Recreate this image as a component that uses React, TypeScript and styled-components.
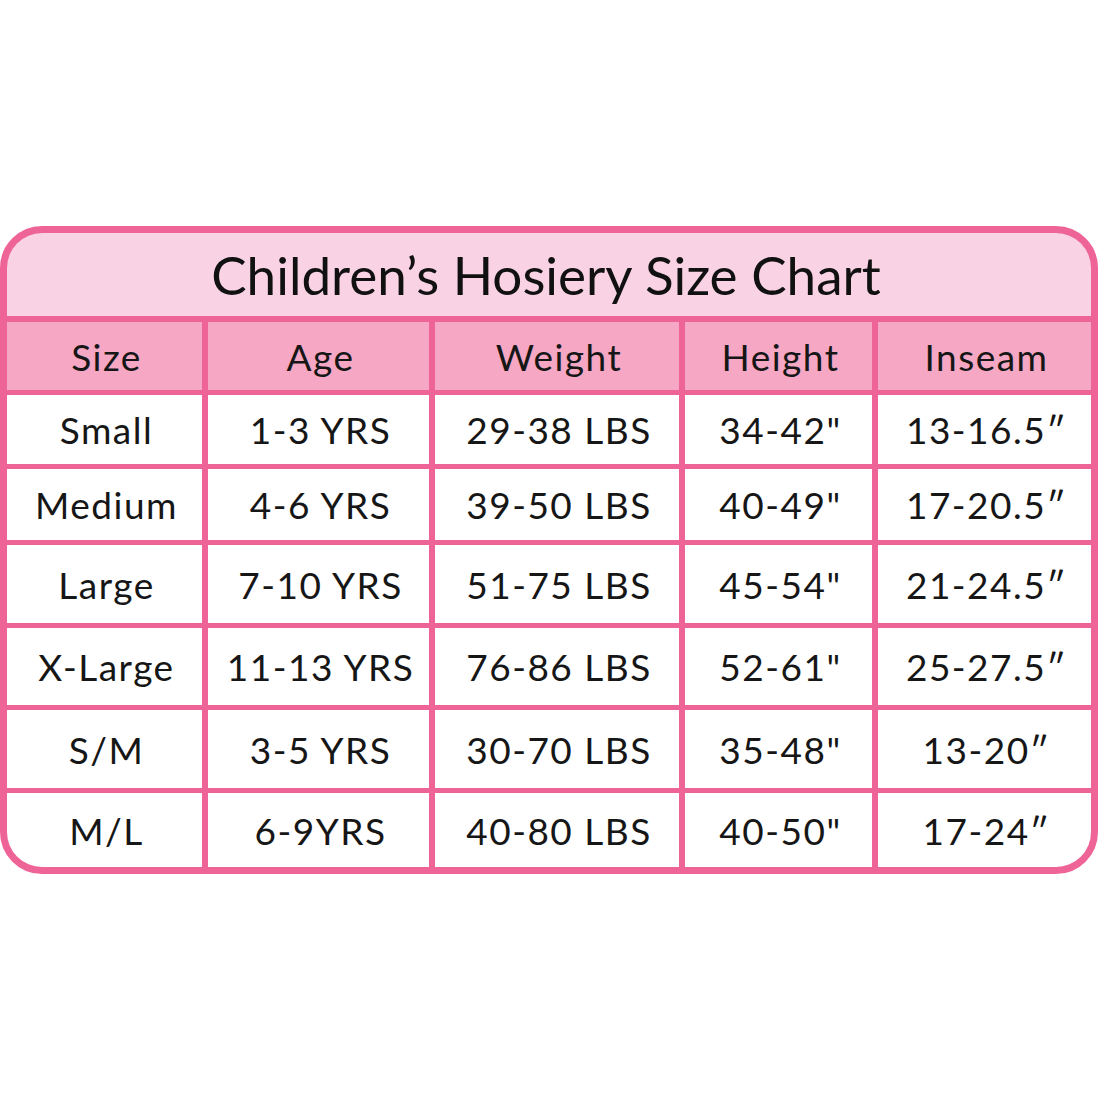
import React from "react";
import styled, { createGlobalStyle } from "styled-components";

const PINK = "#ef6497";

const Global = createGlobalStyle`
  html, body { margin: 0; padding: 0; background: #ffffff; }
  body { font-family: Lato, "Noto Sans", sans-serif; color: #111111; }
`;

const Page = styled.div`
  width: 1100px;
  height: 1100px;
  display: flex;
  align-items: center;
  justify-content: flex-start;
  box-sizing: border-box;
`;

const Frame = styled.div`
  width: 1098px;
  box-sizing: border-box;
  border: 7px solid ${PINK};
  border-radius: 42px;
  overflow: hidden;
  background: ${PINK};
  display: flex;
  flex-direction: column;
`;

const Title = styled.div`
  height: 83px;
  background: #f9d3e4;
  border-bottom: 6px solid ${PINK};
  display: flex;
  align-items: center;
  justify-content: center;
  font-family: Lato, "Noto Sans", sans-serif;
  font-size: 53px;
  font-weight: 400;
  letter-spacing: 0px;
  color: #111111;
  padding-right: 6px;
`;

const Grid = styled.div`
  display: grid;
  grid-template-columns: 195px 221px 244px 187px 213px;
  grid-template-rows: 68px 69px 71px 78px 77px 78px 74px;
  column-gap: 6px;
  row-gap: 5px;
  background: ${PINK};
`;

const Cell = styled.div<{ $head?: boolean }>`
  background: ${(p) => (p.$head ? "#f5a7c3" : "#ffffff")};
  display: flex;
  align-items: center;
  justify-content: center;
  font-family: Lato, "Noto Sans", sans-serif;
  font-size: 37px;
  font-weight: 400;
  letter-spacing: 1.5px;
  color: #161616;
  white-space: nowrap;
  padding-left: 4px;
`;

const headers = ["Size", "Age", "Weight", "Height", "Inseam"];
const rows = [
  ["Small", "1-3 YRS", "29-38 LBS", '34-42"', "13-16.5″"],
  ["Medium", "4-6 YRS", "39-50 LBS", '40-49"', "17-20.5″"],
  ["Large", "7-10 YRS", "51-75 LBS", '45-54"', "21-24.5″"],
  ["X-Large", "11-13 YRS", "76-86 LBS", '52-61"', "25-27.5″"],
  ["S/M", "3-5 YRS", "30-70 LBS", '35-48"', "13-20″"],
  ["M/L", "6-9YRS", "40-80 LBS", '40-50"', "17-24″"],
];

export default function App() {
  return (
    <>
      <Global />
      <Page>
        <Frame>
          <Title>Children’s Hosiery Size Chart</Title>
          <Grid>
            {headers.map((h) => (
              <Cell key={h} $head>
                {h}
              </Cell>
            ))}
            {rows.map((r, i) =>
              r.map((c, j) => <Cell key={`${i}-${j}`}>{c}</Cell>)
            )}
          </Grid>
        </Frame>
      </Page>
    </>
  );
}
